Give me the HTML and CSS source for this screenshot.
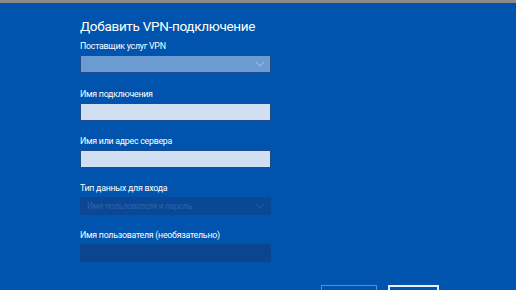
FILE: index.html
```html
<!DOCTYPE html>
<html lang="ru">
<head>
  <meta charset="UTF-8">
  <title>Добавить VPN-подключение</title>
  <link rel="stylesheet" href="styles.css">
</head>
<body>
  <div class="top-bar"></div>
  <div class="dialog">
    <h1 class="title">Добавить VPN-подключение</h1>

    <div class="field field-first">
      <div class="label">Поставщик услуг VPN</div>
      <div class="select select-active">
        <span class="select-text"></span>
        <svg class="chevron" width="10" height="6" viewBox="0 0 10 6"><path d="M1 1 L5 5 L9 1" fill="none" stroke="#a9c4e6" stroke-width="1"/></svg>
      </div>
    </div>

    <div class="field">
      <div class="label">Имя подключения</div>
      <div class="input"></div>
    </div>

    <div class="field">
      <div class="label">Имя или адрес сервера</div>
      <div class="input"></div>
    </div>

    <div class="field">
      <div class="label">Тип данных для входа</div>
      <div class="select select-disabled">
        <span class="select-text">Имя пользователя и пароль</span>
        <svg class="chevron" width="10" height="6" viewBox="0 0 10 6"><path d="M1 1 L5 5 L9 1" fill="none" stroke="#1f5aa3" stroke-width="1"/></svg>
      </div>
    </div>

    <div class="field">
      <div class="label">Имя пользователя (необязательно)</div>
      <div class="input input-disabled"></div>
    </div>
  </div>

  <div class="buttons">
    <div class="btn btn-save"></div>
    <div class="btn btn-cancel"></div>
  </div>
</body>
</html>
```

FILE: styles.css
```css
* {
  margin: 0;
  padding: 0;
  box-sizing: border-box;
}
html, body {
  height: 100%;
  overflow: hidden;
}
body {
  background: #0054ad;
  font-family: Roboto, "Noto Sans", sans-serif;
  color: #fff;
  position: relative;
}
.top-bar {
  height: 3px;
  background: #8a8a8a;
}
.dialog {
  padding-left: 80px;
  padding-top: 13px;
}
.title {
  font-size: 13.5px;
  letter-spacing: -0.3px;
  font-weight: normal;
  line-height: 20px;
}
.field {
  width: 191px;
  margin-bottom: 10px;
}
.field-first {
  margin-bottom: 11px;
}
.label {
  font-size: 8.8px;
  letter-spacing: -0.25px;
  line-height: 15px;
  height: 19px;
  padding-top: 3px;
}
.select, .input {
  height: 18px;
  border: 1px solid #1d4d8c;
  display: flex;
  align-items: center;
  justify-content: space-between;
  padding: 0 5px 0 6px;
}
.select-active {
  background: #6c9bd2;
}
.select-disabled {
  background: #0a4896;
  border-color: #0a4896;
}
.select-text {
  font-size: 8.5px;
  letter-spacing: -0.3px;
  color: #2b63aa;
}
.input {
  background: #d0e0f2;
}
.input-disabled {
  background: #0b4590;
  border-color: #0b4590;
}
.buttons {
  position: absolute;
  left: 321px;
  top: 285px;
  display: flex;
  gap: 11px;
}
.btn {
  height: 24px;
}
.btn-save {
  width: 56px;
  border: 1px solid #5c8fd2;
  border-bottom: none;
}
.btn-cancel {
  width: 51px;
  border: 2px solid #e8eef8;
  border-bottom: none;
}
```
